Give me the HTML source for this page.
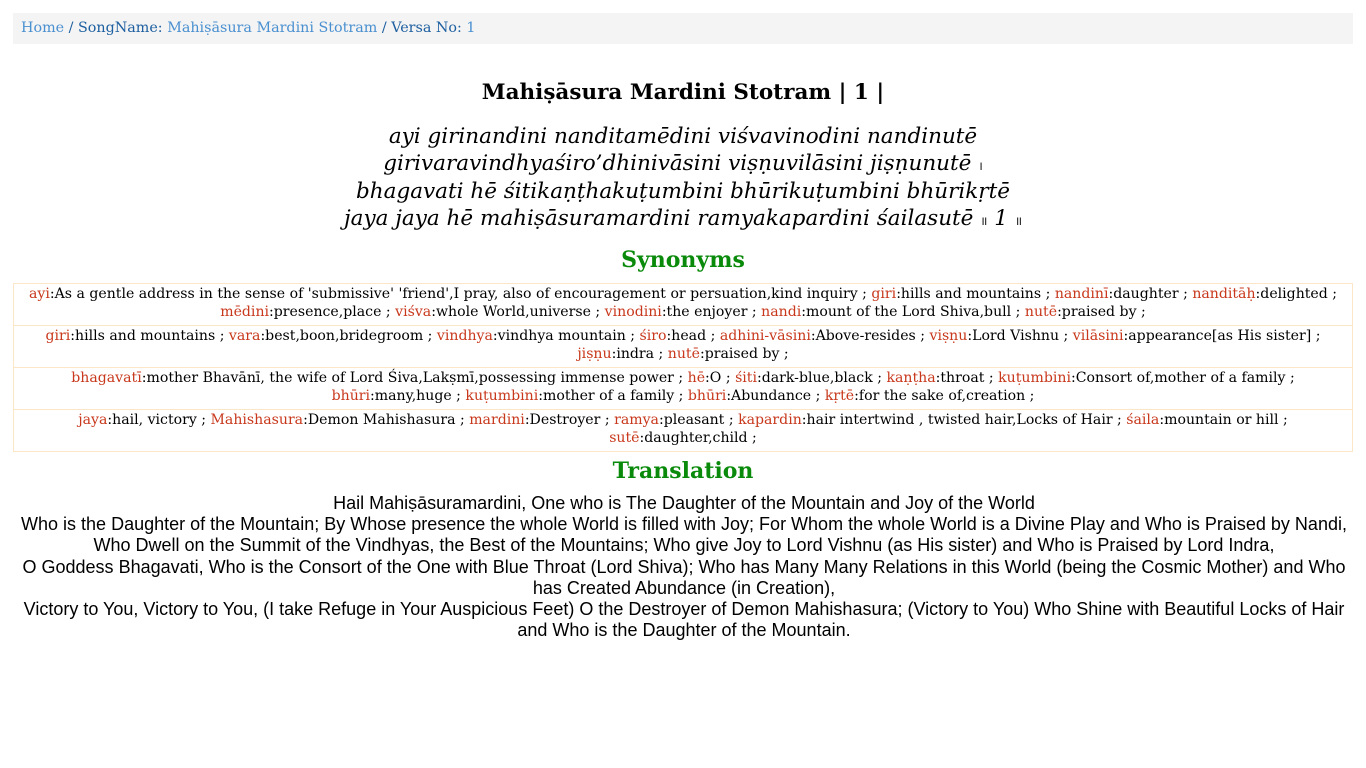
<!DOCTYPE html>
<html><head><meta charset="utf-8"><style>
body{margin:0;background:#fff;font-family:"DejaVu Serif",serif;color:#000}
.bc{margin:13px 13px 0;background:#f4f4f4;height:31px;line-height:31px;padding-left:8px;font-size:14.3px;color:#1d5fa0}
.bc a{color:#4a90d0;text-decoration:none}
h1{font-size:21.5px;text-align:center;margin:0;position:absolute;top:79px;width:1366px;line-height:28px}
.verse{position:absolute;top:124px;width:1366px;text-align:center;font-style:italic;font-size:21.5px;line-height:26.5px;font-family:"DejaVu Serif",serif}
.d{font-size:12px;font-style:normal}
h2{color:#0a8a0a;font-size:22px;text-align:center;margin:0;position:absolute;width:1366px;line-height:28px}
table{position:absolute;top:283px;left:13px;width:1340px;border-collapse:collapse;font-size:14.1px}
td{border:1px solid #fce6c8;text-align:center;line-height:18px;padding:1px 2px 2px;vertical-align:top;height:38px}
.r{color:#c8381c}
.tr{position:absolute;top:493px;left:13px;width:1342px;text-align:center;font-family:"Liberation Sans",sans-serif;font-size:18px;line-height:21.2px}
</style></head><body>
<div class="bc"><a>Home</a> / SongName: <a>Mahiṣāsura Mardini Stotram</a> / Versa No: <a>1</a></div>
<h1>Mahiṣāsura Mardini Stotram | 1 |</h1>
<div class="verse">ayi girinandini nanditamēdini viśvavinodini nandinutē<br>girivaravindhyaśiro’dhinivāsini viṣṇuvilāsini jiṣṇunutē <span class="d">।</span><br>bhagavati hē śitikaṇṭhakuṭumbini bhūrikuṭumbini bhūrikṛtē<br>jaya jaya hē mahiṣāsuramardini ramyakapardini śailasutē <span class="d">॥</span> 1 <span class="d">॥</span></div>
<h2 style="top:246px">Synonyms</h2>
<table>
<tr><td><span class="r">ayi</span>:As a gentle address in the sense of 'submissive' 'friend',I pray, also of encouragement or persuation,kind inquiry ; <span class="r">giri</span>:hills and mountains ; <span class="r">nandinī</span>:daughter ; <span class="r">nanditāḥ</span>:delighted ; <span class="r">mēdini</span>:presence,place ; <span class="r">viśva</span>:whole World,universe ; <span class="r">vinodini</span>:the enjoyer ; <span class="r">nandi</span>:mount of the Lord Shiva,bull ; <span class="r">nutē</span>:praised by ;</td></tr>
<tr><td><span class="r">giri</span>:hills and mountains ; <span class="r">vara</span>:best,boon,bridegroom ; <span class="r">vindhya</span>:vindhya mountain ; <span class="r">śiro</span>:head ; <span class="r">adhini-vāsini</span>:Above-resides ; <span class="r">viṣṇu</span>:Lord Vishnu ; <span class="r">vilāsini</span>:appearance[as His sister] ; <span class="r">jiṣṇu</span>:indra ; <span class="r">nutē</span>:praised by ;</td></tr>
<tr><td><span class="r">bhagavatī</span>:mother Bhavānī, the wife of Lord Śiva,Lakṣmī,possessing immense power ; <span class="r">hē</span>:O ; <span class="r">śiti</span>:dark-blue,black ; <span class="r">kaṇṭha</span>:throat ; <span class="r">kuṭumbini</span>:Consort of,mother of a family ; <span class="r">bhūri</span>:many,huge ; <span class="r">kuṭumbini</span>:mother of a family ; <span class="r">bhūri</span>:Abundance ; <span class="r">kṛtē</span>:for the sake of,creation ;</td></tr>
<tr><td><span class="r">jaya</span>:hail, victory ; <span class="r">Mahishasura</span>:Demon Mahishasura ; <span class="r">mardini</span>:Destroyer ; <span class="r">ramya</span>:pleasant ; <span class="r">kapardin</span>:hair intertwind , twisted hair,Locks of Hair ; <span class="r">śaila</span>:mountain or hill ; <span class="r">sutē</span>:daughter,child ;</td></tr>
</table>
<h2 style="top:457px">Translation</h2>
<div class="tr">Hail Mahiṣāsuramardini, One who is The Daughter of the Mountain and Joy of the World<br>Who is the Daughter of the Mountain; By Whose presence the whole World is filled with Joy; For Whom the whole World is a Divine Play and Who is Praised by Nandi,<br>Who Dwell on the Summit of the Vindhyas, the Best of the Mountains; Who give Joy to Lord Vishnu (as His sister) and Who is Praised by Lord Indra,<br>O Goddess Bhagavati, Who is the Consort of the One with Blue Throat (Lord Shiva); Who has Many Many Relations in this World (being the Cosmic Mother) and Who has Created Abundance (in Creation),<br>Victory to You, Victory to You, (I take Refuge in Your Auspicious Feet) O the Destroyer of Demon Mahishasura; (Victory to You) Who Shine with Beautiful Locks of Hair and Who is the Daughter of the Mountain.</div>
</body></html>
